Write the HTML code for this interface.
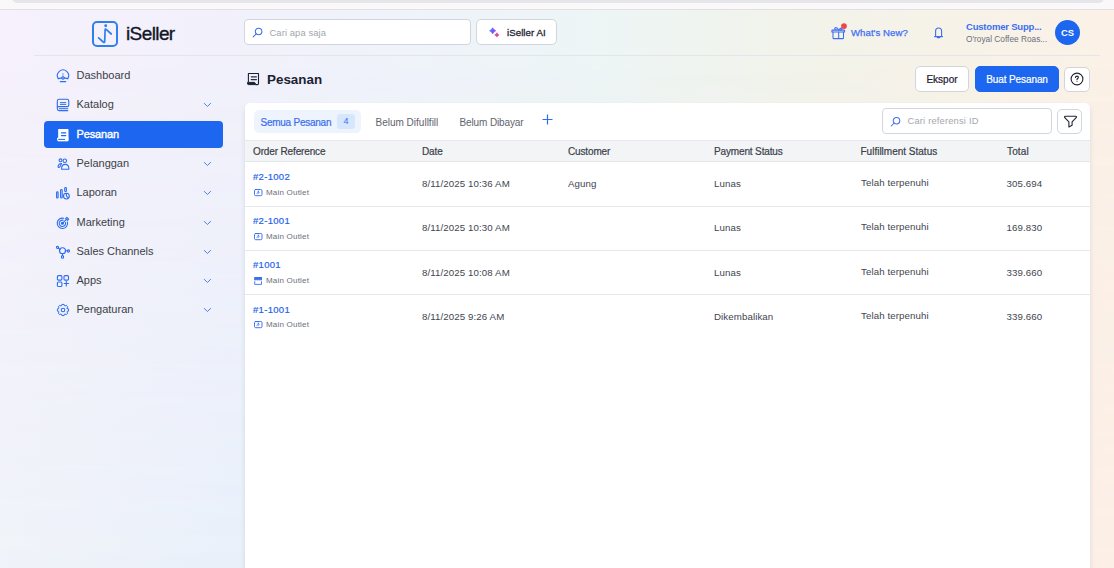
<!DOCTYPE html>
<html><head><meta charset="utf-8">
<style>
*{box-sizing:border-box;margin:0;padding:0}
html,body{width:1114px;height:568px;overflow:hidden}
body{position:relative;font-family:"Liberation Sans",sans-serif;color:#3b3f47;
background:#f4f2fb;}
.bg{position:absolute;left:0;top:10px;width:1114px;height:558px;
background:linear-gradient(90deg,#f6f1fc 0px,#f2f1fb 220px,#eff3fa 420px,#edf5f5 600px,#f2f3ea 800px,#f8f2e8 1000px,#fbf1e7 1114px);}
.bg2{position:absolute;left:0;top:10px;width:1114px;height:558px;
background:linear-gradient(90deg,#f0f3f9 0px,#e9f0fa 230px,#edf2f6 600px,#fbefe7 1000px,#fcefe6 1114px);
-webkit-mask-image:linear-gradient(180deg,transparent 0%,transparent 8%,#000 100%);mask-image:linear-gradient(180deg,transparent 0%,transparent 8%,#000 100%)}
.topstrip{position:absolute;left:0;top:0;width:1114px;height:9px;background:#fbf8f9}
.topbar{position:absolute;left:12px;top:-12px;width:1092px;height:15px;background:#e6e5ea;border-radius:0 0 5px 5px}
.topline{position:absolute;left:0;top:9px;width:1114px;height:1px;background:#e2e0e4}
.abs{position:absolute;white-space:nowrap;line-height:1}
.hline{position:absolute;left:34px;top:55px;width:1066px;height:1px;background:#e4e4ec}
.logo{position:absolute;left:92px;top:21px;width:26px;height:26px;border:2px solid #2f80ed;border-radius:5px}
.search{position:absolute;left:244px;top:19px;width:227px;height:25.5px;border:1px solid #d3d5dc;border-radius:4px;background:#fff}
.aibtn{position:absolute;left:476px;top:19px;width:81px;height:25.5px;border:1px solid #d3d5dc;border-radius:5px;background:#fff}
.avatar{position:absolute;left:1055px;top:20px;width:25px;height:25px;border-radius:50%;background:#1c66f0}
.nav-active{position:absolute;left:44px;top:121px;width:179px;height:27px;border-radius:4px;background:#1c66f0}
.btn{position:absolute;border:1px solid #d3d5dc;border-radius:5px;background:#fff}
.card{position:absolute;left:245px;top:103px;width:845px;height:480px;background:#fff;border-radius:5px;box-shadow:0 3px 5px rgba(40,60,110,0.13)}
.pill{position:absolute;left:254px;top:110px;width:107px;height:23px;border-radius:5px;background:#eef4fe}
.badge{position:absolute;left:337px;top:114px;width:18px;height:15px;border-radius:3px;background:#d6e6fd}
.thead{position:absolute;left:245px;top:140px;width:845px;height:22px;background:#f3f4f6;border-top:1px solid #e5e7eb;border-bottom:1px solid #e5e7eb}
.rowline{position:absolute;left:245px;width:845px;height:1px;background:#e5e7eb}
.med{-webkit-text-stroke:0.22px currentColor}
.nav{font-size:11px;color:#3b3f47}
.th{font-size:10px;color:#3a3f4a;font-weight:normal;-webkit-text-stroke:0.2px currentColor;letter-spacing:-0.14px}
.ref{font-size:9.5px;color:#2563eb;letter-spacing:0.3px;-webkit-text-stroke:0.2px currentColor}
.outlet{font-size:8px;color:#6b6f78;letter-spacing:0.2px}
.td{font-size:9.7px;color:#42464f;letter-spacing:0.1px}
</style></head><body>
<div class="bg"></div>
<div class="bg2"></div>
<div class="topstrip"></div>
<div class="topbar"></div>
<div class="topline"></div>
<div class="hline"></div>

<!-- logo -->
<div class="logo"></div>
<svg class="abs" style="left:92px;top:21px" width="26" height="26" viewBox="0 0 26 26">
 <circle cx="13.7" cy="4.8" r="1.45" fill="#2f80ed"/>
 <path d="M19.3 13 L14.2 8.4 Q13.2 7.6 13.1 8.9 L12.7 20.4 Q12.6 22.2 11.2 21 L6.6 16.9" fill="none" stroke="#2f80ed" stroke-width="1.7" stroke-linecap="round" stroke-linejoin="round"/>
</svg>
<div class="abs" style="left:126px;top:24px;font-size:19px;color:#111527;letter-spacing:-0.6px;-webkit-text-stroke:0.35px #111527">iSeller</div>

<!-- search -->
<div class="search"></div>
<svg class="abs" style="left:252px;top:27.3px" width="11" height="11" viewBox="0 0 11 11">
 <circle cx="6.6" cy="4.5" r="3.3" fill="none" stroke="#3b6ff0" stroke-width="1.05"/>
 <path d="M4.3 6.8 L1.2 9.9" stroke="#3b6ff0" stroke-width="1.05" stroke-linecap="round"/>
</svg>
<div class="abs" style="left:269.5px;top:27.8px;font-size:9.4px;color:#a3a6ad;letter-spacing:0.1px">Cari apa saja</div>

<div class="aibtn"></div>
<svg class="abs" style="left:486px;top:24px" width="18" height="18" viewBox="0 0 18 18"><defs><linearGradient id="g1" x1="0" y1="0" x2="1" y2="0.3"><stop offset="0" stop-color="#2a7dff"/><stop offset="1" stop-color="#9a45f0"/></linearGradient><linearGradient id="g2" x1="0" y1="0" x2="1" y2="0.3"><stop offset="0" stop-color="#a64fe6"/><stop offset="1" stop-color="#f24d67"/></linearGradient></defs><path d="M6.7 3.6999999999999997 Q7.63 5.87 9.8 6.8 Q7.63 7.73 6.7 9.9 Q5.77 7.73 3.6 6.8 Q5.77 5.87 6.7 3.6999999999999997Z" fill="url(#g1)" stroke="url(#g1)" stroke-width="0.6" stroke-linejoin="round"/><path d="M10.9 8.7 Q11.56 10.24 13.100000000000001 10.9 Q11.56 11.56 10.9 13.100000000000001 Q10.24 11.56 8.7 10.9 Q10.24 10.24 10.9 8.7Z" fill="url(#g2)" stroke="url(#g2)" stroke-width="0.6" stroke-linejoin="round"/></svg>
<div class="abs" style="left:507px;top:27.8px;font-size:9.7px;color:#1d2130;-webkit-text-stroke:0.28px #1d2130;letter-spacing:0.05px">iSeller AI</div>

<!-- right header -->
<svg class="abs" style="left:830px;top:23px" width="18" height="18" viewBox="0 0 18 18" fill="none" stroke="#3b6ff0" stroke-width="1.05" stroke-linejoin="round" stroke-linecap="round">
 <path d="M2.4 7.1 H14.1 Q14.6 7.1 14.6 7.6 V9 H1.9 V7.6 Q1.9 7.1 2.4 7.1Z"/>
 <path d="M3 9 V15.1 Q3 15.6 3.5 15.6 H13 Q13.5 15.6 13.5 15.1 V9 M8.7 9 V15.6"/>
 <path d="M8.6 7 Q6.2 3.6 4.9 5.1 Q4.3 6.4 5.9 7 M8.8 7 Q10.8 4.4 11.8 5.4 Q12.4 6.5 10.6 7"/>
 <circle cx="14" cy="3.1" r="2.9" fill="#ee4747" stroke="none"/>
</svg>
<div class="abs" style="left:851px;top:27.9px;font-size:9.6px;color:#3d6ef5;-webkit-text-stroke:0.25px #3d6ef5;letter-spacing:0.05px">What's New?</div>
<svg class="abs" style="left:932px;top:26px" width="13" height="13" viewBox="0 0 13 13" fill="none" stroke="#3b6ff0" stroke-width="1.1" stroke-linejoin="round" stroke-linecap="round">
 <path d="M3.6 10.2 V5 Q3.6 2 6.5 2 Q9.6 2 9.6 5 V10.2"/>
 <path d="M2.6 10.6 H10.5"/>
 <path d="M5.3 11.6 H7.8"/>
</svg>
<div class="abs" style="left:966px;top:22px;font-size:9.5px;color:#3b6ff0;font-weight:bold;letter-spacing:-0.2px">Customer Supp...</div>
<div class="abs" style="left:966px;top:34.8px;font-size:8.3px;color:#6b6f78">O'royal Coffee Roas...</div>
<div class="avatar"></div>
<div class="abs" style="left:1055px;top:28px;width:25px;text-align:center;font-size:9.4px;color:#fff;font-weight:bold">CS</div>

<!-- sidebar -->
<div class="nav-active"></div>
<div class="abs nav" style="left:76.5px;top:69.9px">Dashboard</div>
<div class="abs nav" style="left:76.5px;top:98.9px">Katalog</div>
<div class="abs nav" style="left:76.5px;top:128.5px;color:#fff;-webkit-text-stroke:0.4px #fff;letter-spacing:-0.15px">Pesanan</div>
<div class="abs nav" style="left:76.5px;top:157.7px">Pelanggan</div>
<div class="abs nav" style="left:76.5px;top:187.1px">Laporan</div>
<div class="abs nav" style="left:76.5px;top:217px">Marketing</div>
<div class="abs nav" style="left:76.5px;top:246.1px">Sales Channels</div>
<div class="abs nav" style="left:76.5px;top:274.5px">Apps</div>
<div class="abs nav" style="left:76.5px;top:303.9px">Pengaturan</div>

<!-- title -->
<div class="abs" style="left:267px;top:72.6px;font-size:13.4px;color:#1b2333;font-weight:bold">Pesanan</div>
<div class="btn" style="left:915px;top:66px;width:54px;height:26px"></div>
<div class="abs med" style="left:915px;top:75.4px;width:54px;text-align:center;font-size:10px;color:#1d2130">Ekspor</div>
<div class="btn" style="left:975px;top:66px;width:84px;height:26px;background:#1c66f0;border-color:#1c66f0"></div>
<div class="abs med" style="left:975px;top:75.4px;width:84px;text-align:center;font-size:10px;color:#fff;letter-spacing:-0.1px">Buat Pesanan</div>
<div class="btn" style="left:1064px;top:67px;width:26px;height:25px"></div>

<!-- card -->
<div class="card"></div>
<div class="pill"></div>
<div class="badge"></div>
<div class="abs med" style="left:260.5px;top:117.5px;font-size:10px;color:#3b6ff0;letter-spacing:-0.25px">Semua Pesanan</div>
<div class="abs" style="left:337px;top:117.1px;width:18px;text-align:center;font-size:9px;color:#3b6ff0">4</div>
<div class="abs" style="left:375.5px;top:117.5px;font-size:10px;color:#60646d">Belum Difullfill</div>
<div class="abs" style="left:459.5px;top:117.5px;font-size:10px;color:#60646d;letter-spacing:-0.12px">Belum Dibayar</div>

<div class="search" style="left:882px;top:108px;width:170px;height:26px"></div>
<div class="abs" style="left:907.5px;top:117px;font-size:9.3px;color:#a3a6ad;letter-spacing:0.2px">Cari referensi ID</div>
<div class="btn" style="left:1057px;top:109px;width:25px;height:25px"></div>

<div class="thead"></div>
<div class="abs th" style="left:253px;top:146.5px">Order Reference</div>
<div class="abs th" style="left:422px;top:146.5px">Date</div>
<div class="abs th" style="left:568px;top:146.5px">Customer</div>
<div class="abs th" style="left:714px;top:146.5px">Payment Status</div>
<div class="abs th" style="left:860.5px;top:146.5px;letter-spacing:0px">Fulfillment Status</div>
<div class="abs th" style="left:1007px;top:146.5px;letter-spacing:0.15px">Total</div>

<div class="rowline" style="top:206px"></div>
<div class="rowline" style="top:250px"></div>
<div class="rowline" style="top:294px"></div>

<svg class="abs" style="left:56px;top:68.8px" width="14" height="14" viewBox="0 0 14 14" fill="none" stroke="#2b6cf0" stroke-width="1.1" stroke-linecap="round" stroke-linejoin="round"><path d="M2.3 9.6 A5.6 5.6 0 1 1 11.7 9.6"/><path d="M2.3 9.6 L5.9 8.9 M8.1 8.9 L11.7 9.6"/><path d="M7 4.4 V7.6" stroke-width="0.9" stroke-opacity="0.7"/><circle cx="7" cy="8.9" r="1.2"/><path d="M4.3 12.6 H9.7"/></svg>
<svg class="abs" style="left:56px;top:97.9px" width="14" height="14" viewBox="0 0 14 14" fill="none" stroke="#2b6cf0" stroke-width="1.1" stroke-linecap="round" stroke-linejoin="round"><path d="M11.8 12.6 H3.2 Q1.3 12.6 1.3 10.7 V3.2 Q1.3 1.3 3.2 1.3 H10.9 Q12.8 1.3 12.8 3.2 V6.9 Q12.8 8.6 11.2 8.6 H1.3"/><path d="M3.4 10.6 H11.8" stroke-opacity="0.8"/><path d="M4.3 4.6 H9.8 M4.3 6.5 H9.8" stroke-opacity="0.85"/></svg>
<svg class="abs" style="left:56px;top:127.9px" width="14" height="14" viewBox="0 0 14 14"><path d="M2.8 1.5 H11.9 V12.2 H2.8Z" fill="#fff" stroke="#fff" stroke-width="1.2" stroke-linejoin="round"/><path d="M5.4 4.9 H9.8 M5.4 7.6 H9.8" stroke="#1c66f0" stroke-width="1.1" stroke-linecap="round"/><path d="M1.6 10 H8.5 L9.8 11.3 V9.6 L11.9 9.6 V12.9 H2.4 Q1.6 12.9 1.6 12 Z" fill="#fff" stroke="#fff" stroke-width="0.9" stroke-linejoin="round"/><path d="M2.6 11.4 H8.6" stroke="#1c66f0" stroke-width="1" stroke-linecap="round"/></svg>
<svg class="abs" style="left:56px;top:157.2px" width="14" height="14" viewBox="0 0 14 14" fill="none" stroke="#2b6cf0" stroke-width="1.1" stroke-linecap="round" stroke-linejoin="round"><circle cx="4.5" cy="3.3" r="1.4"/><circle cx="8.8" cy="3.7" r="1.75"/><path d="M5.6 12.2 Q5.4 7.4 9.2 7.4 Q13 7.4 12.9 12.2 Z"/><path d="M5.6 6.5 Q3.2 6.3 2.3 8.5 Q1.7 10.3 2.7 10.5 Q3.7 10.6 4.6 8.7 Q5 7.5 5.6 6.5Z"/></svg>
<svg class="abs" style="left:56px;top:185.7px" width="14" height="14" viewBox="0 0 14 14" fill="none" stroke="#2b6cf0" stroke-width="1.1" stroke-linecap="round" stroke-linejoin="round"><rect x="0.6" y="5.7" width="1.5" height="6.3" rx="0.75"/><rect x="4.6" y="3.5" width="1.6" height="8.5" rx="0.8"/><rect x="8.7" y="1.5" width="1.7" height="4.2" rx="0.85"/><circle cx="10.4" cy="10.1" r="2.9"/><path d="M10.4 7.6 V10.1 L12.2 11.6"/></svg>
<svg class="abs" style="left:56px;top:216.2px" width="14" height="14" viewBox="0 0 14 14" fill="none" stroke="#2b6cf0" stroke-width="1.1" stroke-linecap="round" stroke-linejoin="round"><path d="M11.42 5.95 A5.2 5.2 0 1 1 7.75 2.28"/><path d="M9.49 6.47 A3.2 3.2 0 1 1 7.23 4.21"/><circle cx="6.4" cy="7.3" r="1" fill="#2b6cf0"/><path d="M6.4 7.3 L9.9 3.8"/><path d="M10.9 1.3 L12.7 3.1 L11.4 4.4 L9.6 2.6Z"/></svg>
<svg class="abs" style="left:56px;top:245.2px" width="14" height="14" viewBox="0 0 14 14" fill="none" stroke="#2b6cf0" stroke-width="1.1" stroke-linecap="round" stroke-linejoin="round"><circle cx="6.5" cy="5.7" r="3"/><circle cx="1.5" cy="2.3" r="1.1"/><circle cx="12.4" cy="6" r="1.1"/><ellipse cx="6.5" cy="11.9" rx="1.1" ry="1.3"/><path d="M2.3 3.1 L4.3 4.7 M9.5 5.8 H11.3 M6.5 8.7 V10.6"/></svg>
<svg class="abs" style="left:56px;top:274.0px" width="14" height="14" viewBox="0 0 14 14" fill="none" stroke="#2b6cf0" stroke-width="1.1" stroke-linecap="round" stroke-linejoin="round"><rect x="1.4" y="1.6" width="4.5" height="4.5" rx="1.1"/><rect x="8" y="1.6" width="4.5" height="4.5" rx="1.1"/><rect x="1.4" y="8" width="4.5" height="4.5" rx="1.1"/><path d="M10.3 7.4 V12 M8.2 9.5 H12.6"/></svg>
<svg class="abs" style="left:56px;top:302.8px" width="14" height="14" viewBox="0 0 14 14" fill="none" stroke="#2b6cf0" stroke-width="1.1" stroke-linecap="round" stroke-linejoin="round"><path d="M11.30 5.67 L12.59 5.87 L12.59 8.13 L11.30 8.33 L10.98 9.10 L11.75 10.15 L10.15 11.75 L9.10 10.98 L8.33 11.30 L8.13 12.59 L5.87 12.59 L5.67 11.30 L4.90 10.98 L3.85 11.75 L2.25 10.15 L3.02 9.10 L2.70 8.33 L1.41 8.13 L1.41 5.87 L2.70 5.67 L3.02 4.90 L2.25 3.85 L3.85 2.25 L4.90 3.02 L5.67 2.70 L5.87 1.41 L8.13 1.41 L8.33 2.70 L9.10 3.02 L10.15 2.25 L11.75 3.85 L10.98 4.90Z" stroke-width="1"/><circle cx="7" cy="7" r="1.8"/></svg>
<svg class="abs" style="left:202px;top:97.9px" width="10" height="10" viewBox="0 0 10 10" fill="none" stroke="#4a7ef2" stroke-width="1" stroke-linecap="round" stroke-linejoin="round"><path d="M2.3 5.4 L5.4 8.5 L8.6 5.4"/></svg>
<svg class="abs" style="left:202px;top:157.2px" width="10" height="10" viewBox="0 0 10 10" fill="none" stroke="#4a7ef2" stroke-width="1" stroke-linecap="round" stroke-linejoin="round"><path d="M2.3 5.4 L5.4 8.5 L8.6 5.4"/></svg>
<svg class="abs" style="left:202px;top:185.7px" width="10" height="10" viewBox="0 0 10 10" fill="none" stroke="#4a7ef2" stroke-width="1" stroke-linecap="round" stroke-linejoin="round"><path d="M2.3 5.4 L5.4 8.5 L8.6 5.4"/></svg>
<svg class="abs" style="left:202px;top:216.2px" width="10" height="10" viewBox="0 0 10 10" fill="none" stroke="#4a7ef2" stroke-width="1" stroke-linecap="round" stroke-linejoin="round"><path d="M2.3 5.4 L5.4 8.5 L8.6 5.4"/></svg>
<svg class="abs" style="left:202px;top:245.2px" width="10" height="10" viewBox="0 0 10 10" fill="none" stroke="#4a7ef2" stroke-width="1" stroke-linecap="round" stroke-linejoin="round"><path d="M2.3 5.4 L5.4 8.5 L8.6 5.4"/></svg>
<svg class="abs" style="left:202px;top:274px" width="10" height="10" viewBox="0 0 10 10" fill="none" stroke="#4a7ef2" stroke-width="1" stroke-linecap="round" stroke-linejoin="round"><path d="M2.3 5.4 L5.4 8.5 L8.6 5.4"/></svg>
<svg class="abs" style="left:202px;top:302.8px" width="10" height="10" viewBox="0 0 10 10" fill="none" stroke="#4a7ef2" stroke-width="1" stroke-linecap="round" stroke-linejoin="round"><path d="M2.3 5.4 L5.4 8.5 L8.6 5.4"/></svg>
<svg class="abs" style="left:246px;top:72px" width="14" height="14" viewBox="0 0 14 14" fill="none" stroke="#1b2333" stroke-linejoin="round"><path d="M2.4 10 V1.5 H12.5 V11.6 Q12.5 12.6 11.5 12.6 H9.5" stroke-width="1.1"/><path d="M5.3 4.8 H10.4 M5.3 7.6 H10.4" stroke-width="1.3" stroke-linecap="round" stroke="#2a3040"/><path d="M1.5 10.4 H8.5 L9.5 11.6 V12.6 H2.5 Q1.5 12.6 1.5 11.6Z" fill="#1b2333" stroke-width="1"/></svg>
<svg class="abs" style="left:1069px;top:71px" width="16" height="16" viewBox="0 0 16 16" fill="none" stroke="#1f2430" stroke-width="1.1" stroke-linecap="round"><circle cx="8" cy="8" r="5.9"/><path d="M6.5 6.4 Q6.5 5.1 8 5.1 Q9.4 5.1 9.4 6.3 Q9.4 7.2 8.5 7.6 Q8 7.9 8 8.7" stroke-width="1.15"/><circle cx="8" cy="10.4" r="0.5" fill="#1f2430" stroke="none"/></svg>
<svg class="abs" style="left:1062.5px;top:114.5px" width="14" height="14" viewBox="0 0 14 14" fill="none" stroke="#1f2430" stroke-width="1.1" stroke-linejoin="round"><path d="M2.3 1.3 H12.7 Q13.9 1.5 13.2 2.7 L9.1 6.8 V10.3 L5.9 12 V6.8 L1.8 2.7 Q1.1 1.5 2.3 1.3Z"/></svg>
<svg class="abs" style="left:890px;top:116px" width="11" height="11" viewBox="0 0 11 11"><circle cx="6.5" cy="4.7" r="3.3" fill="none" stroke="#3b6ff0" stroke-width="1.05"/><path d="M4.2 7 L1.2 10" stroke="#3b6ff0" stroke-width="1.05" stroke-linecap="round"/></svg>
<svg class="abs" style="left:542px;top:114px" width="11" height="11" viewBox="0 0 11 11" stroke="#2b6cf0" stroke-width="1.2"><path d="M5.5 0.5 V10.5 M0.5 5.5 H10.5"/></svg>
<!--ROWS-->
<div class="abs ref" style="left:253px;top:171.8px">#2-1002</div>
<svg class="abs" style="left:253px;top:188px" width="10" height="9" viewBox="0 0 10 9" fill="none" stroke="#3b6ff0" stroke-width="0.95" stroke-linecap="round" stroke-linejoin="round"><rect x="1.5" y="1.5" width="7.5" height="6.2" rx="1.2"/><path d="M5.2 2.9 L5 4.4 Q4.7 5.2 3.9 5.5 M5.3 3.6 L6.3 4.5 L5.1 5.3" stroke-width="0.85"/></svg>
<div class="abs outlet" style="left:266px;top:188.5px">Main Outlet</div>
<div class="abs td" style="left:422px;top:179.1px">8/11/2025 10:36 AM</div>
<div class="abs td" style="left:568px;top:179.1px">Agung</div>
<div class="abs td" style="left:714px;top:179.1px">Lunas</div>
<div class="abs td" style="left:861px;top:178.0px">Telah terpenuhi</div>
<div class="abs td" style="left:1006.5px;top:179.1px">305.694</div>
<div class="abs ref" style="left:253px;top:216.05px">#2-1001</div>
<svg class="abs" style="left:253px;top:232px" width="10" height="9" viewBox="0 0 10 9" fill="none" stroke="#3b6ff0" stroke-width="0.95" stroke-linecap="round" stroke-linejoin="round"><rect x="1.5" y="1.5" width="7.5" height="6.2" rx="1.2"/><path d="M5.2 2.9 L5 4.4 Q4.7 5.2 3.9 5.5 M5.3 3.6 L6.3 4.5 L5.1 5.3" stroke-width="0.85"/></svg>
<div class="abs outlet" style="left:266px;top:232.75px">Main Outlet</div>
<div class="abs td" style="left:422px;top:223.35px">8/11/2025 10:30 AM</div>
<div class="abs td" style="left:714px;top:223.35px">Lunas</div>
<div class="abs td" style="left:861px;top:222.25px">Telah terpenuhi</div>
<div class="abs td" style="left:1006.5px;top:223.35px">169.830</div>
<div class="abs ref" style="left:253px;top:260.3px">#1001</div>
<svg class="abs" style="left:253px;top:276px" width="10" height="10" viewBox="0 0 10 10"><rect x="1.2" y="1" width="7.8" height="2.6" fill="#3b6ff0"/><circle cx="2.1" cy="3.6" r="0.9" fill="#3b6ff0"/><circle cx="4.1" cy="3.6" r="0.9" fill="#3b6ff0"/><circle cx="6.1" cy="3.6" r="0.9" fill="#3b6ff0"/><circle cx="8.1" cy="3.6" r="0.9" fill="#3b6ff0"/><path d="M1.7 5.3 V8.4 H8.5 V5.3" fill="none" stroke="#3b6ff0" stroke-width="0.9"/></svg>
<div class="abs outlet" style="left:266px;top:277.0px">Main Outlet</div>
<div class="abs td" style="left:422px;top:267.6px">8/11/2025 10:08 AM</div>
<div class="abs td" style="left:714px;top:267.6px">Lunas</div>
<div class="abs td" style="left:861px;top:266.5px">Telah terpenuhi</div>
<div class="abs td" style="left:1006.5px;top:267.6px">339.660</div>
<div class="abs ref" style="left:253px;top:304.55px">#1-1001</div>
<svg class="abs" style="left:253px;top:320px" width="10" height="9" viewBox="0 0 10 9" fill="none" stroke="#3b6ff0" stroke-width="0.95" stroke-linecap="round" stroke-linejoin="round"><rect x="1.5" y="1.5" width="7.5" height="6.2" rx="1.2"/><path d="M5.2 2.9 L5 4.4 Q4.7 5.2 3.9 5.5 M5.3 3.6 L6.3 4.5 L5.1 5.3" stroke-width="0.85"/></svg>
<div class="abs outlet" style="left:266px;top:321.25px">Main Outlet</div>
<div class="abs td" style="left:422px;top:311.85px">8/11/2025 9:26 AM</div>
<div class="abs td" style="left:714px;top:311.85px">Dikembalikan</div>
<div class="abs td" style="left:861px;top:310.75px">Telah terpenuhi</div>
<div class="abs td" style="left:1006.5px;top:311.85px">339.660</div>
<!--/ROWS-->
</body></html>
